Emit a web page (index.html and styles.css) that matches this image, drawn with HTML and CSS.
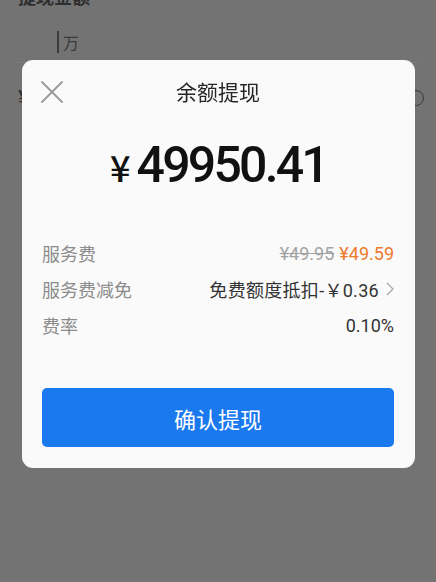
FILE: index.html
```
<!DOCTYPE html>
<html lang="zh-CN">
<head>
<meta charset="utf-8">
<title>余额提现</title>
<link rel="stylesheet" href="styles.css">
</head>
<body>
<div class="page">
  <div class="page-title">提现金额</div>
  <div class="page-input"><span class="caret"></span><span class="unit">万</span></div>
  <div class="page-row"><span class="yen">¥</span><span class="info"></span></div>
</div>

<div class="overlay">
  <div class="modal">
    <div class="header">
      <svg class="close" width="22" height="22" viewBox="0 0 22 22"><path d="M1 1L21 21M21 1L1 21" stroke="#9a9a9a" stroke-width="1.8" fill="none" stroke-linecap="round"/></svg>
      <div class="title">余额提现</div>
    </div>
    <div class="amount"><span class="amount-yen">¥</span>49950.41</div>
    <div class="rows">
      <div class="row">
        <span class="label">服务费</span>
        <span class="value"><span class="old">¥49.95</span><span class="new">¥49.59</span></span>
      </div>
      <div class="row">
        <span class="label">服务费减免</span>
        <span class="value wide">免费额度抵扣-￥0.36<svg class="chev" width="8" height="14" viewBox="0 0 8 14"><path d="M1 1L7 7L1 13" stroke="#a8a8a8" stroke-width="1.3" fill="none"/></svg></span>
      </div>
      <div class="row">
        <span class="label">费率</span>
        <span class="value">0.10%</span>
      </div>
    </div>
    <div class="btn">确认提现</div>
  </div>
</div>
</body>
</html>
```
FILE: styles.css
```
html, body {
  margin: 0;
  padding: 0;
  background: #737373;
  width: 436px;
  height: 582px;
  overflow: hidden;
  font-family: Roboto, "Noto Sans CJK SC", sans-serif;
}
.page {
  padding: 0 18px;
}
.page-title {
  margin-top: -12px;
  height: 20px;
  font-size: 18px;
  font-weight: 700;
  color: #2e2e2e;
  line-height: 20px;
}
.page-input {
  display: flex;
  align-items: center;
  padding-left: 39px;
  height: 40px;
  margin-top: 14px;
  border-bottom: 1px solid #7d7d7d;
}
.caret {
  width: 2px;
  height: 22px;
  background: #3c3c3c;
  margin-right: 4px;
}
.unit {
  font-size: 16px;
  color: #3a3a3a;
}
.page-row {
  display: flex;
  justify-content: space-between;
  align-items: center;
  height: 70px;
}
.yen {
  font-size: 22px;
  color: #2a2a2a;
}
.info {
  width: 14px;
  height: 14px;
  border: 1.5px solid #3a3a3a;
  border-radius: 50%;
  margin-right: -6px;
}
.overlay {
  position: fixed;
  inset: 0;
  padding: 60px 0 0 22px;
}
.modal {
  width: 393px;
  height: 408px;
  background: #fafafa;
  border-radius: 11px;
  padding: 0 21px 0 20px;
  box-sizing: border-box;
}
.header {
  position: relative;
  height: 62px;
  display: flex;
  justify-content: center;
  align-items: center;
}
.close {
  position: absolute;
  left: -1px;
  top: 21px;
}
.title {
  font-family: "Noto Sans CJK SC", sans-serif;
  font-size: 21px;
  color: #262626;
  margin-top: -1px;
}
.amount {
  height: 86px;
  line-height: 86px;
  text-align: center;
  font-size: 50px;
  font-weight: 500;
  color: #111;
  letter-spacing: -2.8px;
  margin-left: 1px;
}
.amount-yen {
  font-family: "Noto Sans CJK SC", sans-serif;
  font-size: 36px;
  font-weight: 500;
  letter-spacing: 0;
  margin-right: 6px;
}
.rows {
  padding-top: 27px;
}
.row {
  height: 36px;
  display: flex;
  justify-content: space-between;
  align-items: center;
}
.label {
  font-family: "Noto Sans CJK SC", sans-serif;
  font-size: 18px;
  color: #8c8c8c;
}
.value {
  font-size: 18px;
  color: #333;
  display: flex;
  align-items: center;
}
.wide {
  letter-spacing: 0.3px;
}
.old {
  color: #a3a3a3;
  text-decoration: line-through;
  margin-right: 5px;
}
.new {
  color: #f0782c;
}
.chev {
  margin-left: 7px;
}
.btn {
  margin-top: 45px;
  height: 59px;
  background: #1a79ef;
  border-radius: 5px;
  color: #fff;
  font-family: "Noto Sans CJK SC", sans-serif;
  font-size: 22px;
  display: flex;
  justify-content: center;
  align-items: center;
}
```
